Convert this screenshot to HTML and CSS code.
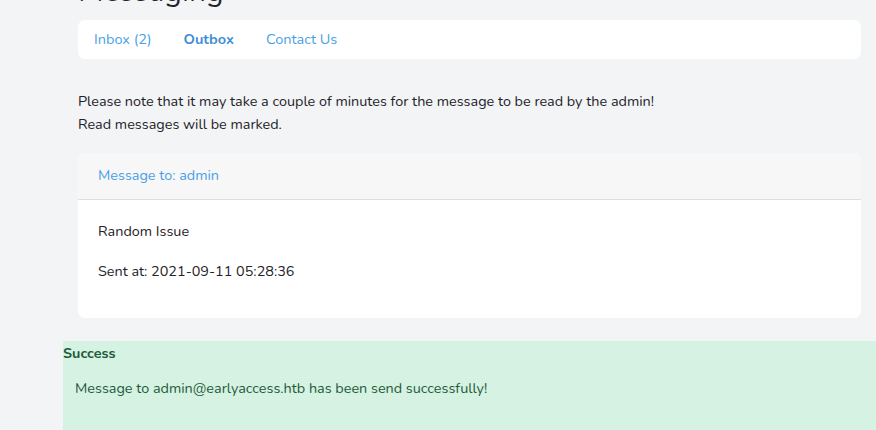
FILE: index.html
```html
<!DOCTYPE html>
<html>
<head>
<meta charset="utf-8">
<link rel="stylesheet" href="styles.css">
</head>
<body>
<div class="page">
  <h1 class="title">Messaging</h1>
  <nav class="tabs">
    <a class="tab">Inbox (2)</a>
    <a class="tab active">Outbox</a>
    <a class="tab">Contact Us</a>
  </nav>
  <div class="note">
    <p>Please note that it may take a couple of minutes for the message to be read by the admin!</p>
    <p>Read messages will be marked.</p>
  </div>
  <div class="card">
    <div class="card-header">Message to: admin</div>
    <div class="card-body">
      <p>Random Issue</p>
      <p>Sent at: 2021-09-11 05:28:36</p>
    </div>
  </div>
</div>
<div class="alert">
  <div class="alert-title">Success</div>
  <div class="alert-body">Message to admin@earlyaccess.htb has been send successfully!</div>
</div>
</body>
</html>
```

FILE: styles.css
```css
html, body {
  margin: 0;
  padding: 0;
  background: #f3f4f6;
  font-family: "Nunito", "Lato", "Open Sans", sans-serif;
  color: #1f2329;
  overflow: hidden;
}
.page {
  padding: 0 15px 0 78px;
}
.title {
  margin: -26px 0 0 0;
  font-size: 30px;
  line-height: 36px;
  font-weight: 400;
  color: #1f2329;
  height: 20px;
  overflow: visible;
}
.tabs {
  margin-top: 26px;
  height: 39px;
  box-sizing: border-box;
  padding-bottom: 2px;
  background: #fff;
  border-radius: 7px;
  display: flex;
  align-items: center;
  padding-left: 16px;
  gap: 32px;
}
.tab {
  color: #4a9fe6;
  font-size: 14.5px;
}
.tab.active {
  font-weight: 700;
  color: #3f8fd6;
}
.note {
  margin-top: 31px;
  font-size: 14.4px;
  line-height: 23px;
}
.note p {
  margin: 0;
}
.card {
  margin-top: 17px;
  background: #fff;
  border-radius: 7px;
  overflow: hidden;
}
.card-header {
  height: 47px;
  box-sizing: border-box;
  padding-bottom: 2px;
  background: #f7f7f7;
  border-bottom: 1px solid #dedede;
  display: flex;
  align-items: center;
  padding-left: 20px;
  color: #4a9fe6;
  font-size: 14.4px;
}
.card-body {
  padding: 19px 20px;
  font-size: 14.4px;
  line-height: 24px;
}
.card-body p {
  margin: 0 0 16px 0;
}
.alert {
  margin: 23px 0 0 63px;
  background: #d5f2e2;
  color: #1f5a3a;
  height: 120px;
}
.alert-title {
  font-weight: 700;
  font-size: 14.4px;
  line-height: 24px;
}
.alert-body {
  padding: 11px 12px;
  font-size: 14.4px;
  line-height: 24px;
}
```
